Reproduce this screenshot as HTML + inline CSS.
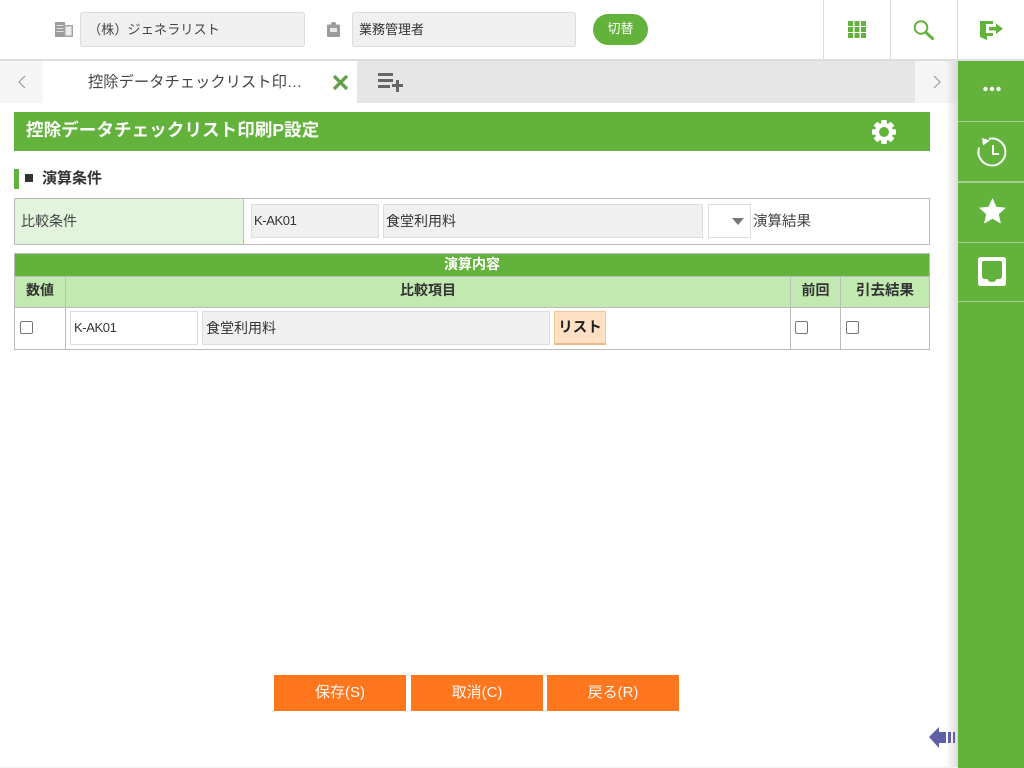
<!DOCTYPE html>
<html lang="ja"><head><meta charset="utf-8"><title>控除データチェックリスト印刷P設定</title>
<style>
html,body{margin:0;padding:0;width:1024px;height:768px;overflow:hidden;background:#fff}
body{font-family:"Liberation Sans","Noto Sans CJK JP",sans-serif;font-size:14px;color:#333;position:relative}
.a{position:absolute;box-sizing:border-box}
.t{position:absolute;white-space:nowrap;line-height:20px}
.inp{position:absolute;box-sizing:border-box;background:#f0f0f0;border:1px solid #ddd;line-height:32px;padding-left:3px;font-size:14px;color:#333;white-space:nowrap}
.w{background:#fff}
.btn{position:absolute;box-sizing:border-box;background:#ff761c;color:#f8f8f8;width:132px;height:36px;top:675px;text-align:center;line-height:35px;font-size:15px}
.cb{position:absolute;box-sizing:border-box;width:13px;height:13px;border:1px solid #767676;border-radius:2px;background:#fff}
.b{font-weight:bold}
</style></head><body>

<!-- header -->
<div class="a" style="left:0;top:59px;width:1024px;height:2px;background:#ddd"></div>
<svg class="a" style="left:55px;top:22px" width="18" height="15" viewBox="0 0 18 15"><rect x="0" y="0" width="10" height="15" fill="#9c9c9c"/><rect x="1.500" y="3" width="7" height="1" fill="#e2e2e2"/><rect x="1.500" y="6" width="7" height="1" fill="#e2e2e2"/><rect x="1.500" y="9" width="7" height="1" fill="#e2e2e2"/><rect x="9" y="3" width="9" height="12" fill="#a6a6a6"/><rect x="10.500" y="4.500" width="6" height="9" fill="#ececec"/></svg>
<div class="inp" style="left:80px;top:12px;width:225px;height:35px;border-radius:3px;line-height:33px;padding-left:7px;font-size:13.200px;color:#444">（株）ジェネラリスト</div>
<svg class="a" style="left:327px;top:22px" width="13" height="15" viewBox="0 0 13 15"><path d="M1 2.500H4V1.500Q4 0 6.500 0T9 1.500V2.500H12Q13 2.500 13 3.500V14Q13 15 12 15H1Q0 15 0 14V3.500Q0 2.500 1 2.500Z" fill="#9c9c9c"/><rect x="3" y="6" width="7" height="4" fill="#e8e8e8"/></svg>
<div class="inp" style="left:352px;top:12px;width:224px;height:35px;border-radius:3px;line-height:33px;padding-left:6px;font-size:13px">業務管理者</div>
<div class="a" style="left:593px;top:14px;width:55px;height:31px;border-radius:16px;background:#62b23c;color:#fff;text-align:center;line-height:30px;font-size:13px">切替</div>
<div class="a" style="left:823px;top:0;width:1px;height:59px;background:#ddd"></div>
<div class="a" style="left:890px;top:0;width:1px;height:59px;background:#ddd"></div>
<div class="a" style="left:957px;top:0;width:1px;height:59px;background:#ddd"></div>
<svg class="a" style="left:848px;top:21px" width="18" height="17" viewBox="0 0 18 17" fill="#62b23c"><rect width="5" height="5"/><rect x="6.500" width="5" height="5"/><rect x="13" width="5" height="5"/><rect y="6" width="5" height="5"/><rect x="6.500" y="6" width="5" height="5"/><rect x="13" y="6" width="5" height="5"/><rect y="12" width="5" height="5"/><rect x="6.500" y="12" width="5" height="5"/><rect x="13" y="12" width="5" height="5"/></svg>
<svg class="a" style="left:913px;top:19px" width="22" height="22" viewBox="0 0 22 22" fill="none" stroke="#62b23c"><circle cx="8" cy="8.500" r="6.300" stroke-width="2"/><path d="M13 13.500L19.500 19.500" stroke-width="3" stroke-linecap="round"/></svg>
<svg class="a" style="left:980px;top:20px" width="23" height="21" viewBox="0 0 23 21" fill="#62b23c"><path d="M0 1H13V4H6V13H13V16H7V20L0 17Z"/><path d="M9 7H16V3.500L23 8.800L16 14V10.500H9Z"/></svg>

<!-- tabs -->
<div class="a" style="left:0;top:61px;width:958px;height:42px;background:#f5f5f5"></div>
<div class="a" style="left:43px;top:61px;width:314px;height:42px;background:#fff"></div>
<div class="a" style="left:357px;top:61px;width:558px;height:42px;background:#e6e6e6"></div>
<svg class="a" style="left:17px;top:75px" width="10" height="14" viewBox="0 0 10 14" fill="none" stroke="#999" stroke-width="1.200"><path d="M8 1L2 7L8 13"/></svg>
<svg class="a" style="left:932px;top:75px" width="10" height="14" viewBox="0 0 10 14" fill="none" stroke="#999" stroke-width="1.200"><path d="M2 1L8 7L2 13"/></svg>
<div class="t" style="left:88px;top:73px;font-size:15.300px;color:#444;width:216px;overflow:hidden">控除データチェックリスト印…</div>
<svg class="a" style="left:333px;top:75px" width="15" height="15" viewBox="0 0 15 15" stroke="#62a04a" stroke-width="3.400"><path d="M1 1L14 14M14 1L1 14"/></svg>
<svg class="a" style="left:378px;top:73px" width="26" height="20" viewBox="0 0 26 20" fill="#666"><rect width="15" height="3"/><rect y="6" width="15" height="3"/><rect y="12" width="12" height="3"/><rect x="14" y="11" width="11" height="3"/><rect x="18" y="7" width="3" height="12"/></svg>

<!-- side bar -->
<div class="a" style="left:946px;top:61px;width:12px;height:707px;background:linear-gradient(to right,rgba(200,200,205,0),rgba(190,190,195,.55))"></div>
<div class="a" style="left:958px;top:61px;width:66px;height:707px;background:#62b23c"></div>
<div class="a" style="left:958px;top:121px;width:66px;height:1px;background:#a3d08e"></div>
<div class="a" style="left:958px;top:181px;width:66px;height:2px;background:#a3d08e"></div>
<div class="a" style="left:958px;top:242px;width:66px;height:1px;background:#a3d08e"></div>
<div class="a" style="left:958px;top:301px;width:66px;height:1px;background:#a3d08e"></div>
<svg class="a" style="left:983px;top:86px" width="18" height="6" viewBox="0 0 18 6" fill="#fff"><circle cx="2.500" cy="3" r="2.200"/><circle cx="9" cy="3" r="2.200"/><circle cx="15.500" cy="3" r="2.200"/></svg>
<svg class="a" style="left:976px;top:136px" width="31" height="31" viewBox="0 0 31 31" fill="none" stroke="#fff" stroke-width="2"><path d="M13 2.800A13.500 13.500 0 1 1 3.200 11.500"/><path d="M6 2L7 9.500L14 4.500Z" fill="#fff" stroke="none"/><path d="M17 9V18H23"/></svg>
<svg class="a" style="left:979px;top:198px" width="27" height="26" viewBox="0 0 27 26" fill="#fff"><path d="M13.500 0L17.400 8.800L27 9.800L19.800 16.200L21.900 25.600L13.500 20.700L5.100 25.600L7.200 16.200L0 9.800L9.600 8.800Z"/></svg>
<svg class="a" style="left:978px;top:257px" width="28" height="29" viewBox="0 0 28 29"><path fill-rule="evenodd" fill="#fff" d="M3 0H25Q28 0 28 3V26Q28 29 25 29H3Q0 29 0 26V3Q0 0 3 0ZM6 4Q4 4 4 6V19Q4 22 7 22H9.500Q10.500 25 14 25T18.500 22H21Q24 22 24 19V6Q24 4 22 4Z"/></svg>

<!-- title -->
<div class="a" style="left:14px;top:112px;width:916px;height:39px;background:#62b23c"></div>
<div class="t b" style="left:26px;top:120px;font-size:17.600px;color:#fff;line-height:21px">控除データチェックリスト印刷P設定</div>
<svg class="a" style="left:871px;top:119px" width="26" height="26" viewBox="0 0 26 26"><g fill="#fff"><circle cx="13" cy="13" r="9"/><rect x="10.200" y="1" width="5.600" height="24" rx="1"/><rect x="10.200" y="1" width="5.600" height="24" rx="1" transform="rotate(45 13 13)"/><rect x="10.200" y="1" width="5.600" height="24" rx="1" transform="rotate(90 13 13)"/><rect x="10.200" y="1" width="5.600" height="24" rx="1" transform="rotate(135 13 13)"/></g><circle cx="13" cy="13" r="5" fill="#62b23c"/></svg>

<!-- section -->
<div class="a" style="left:14px;top:169px;width:5px;height:20px;background:#62b23c"></div>
<div class="a" style="left:25px;top:174px;width:8px;height:8px;background:#333"></div>
<div class="t b" style="left:42px;top:169px;font-size:15px;color:#333">演算条件</div>

<!-- condition table -->
<div class="a" style="left:14px;top:198px;width:916px;height:47px;border:1px solid #bbb"></div>
<div class="a" style="left:15px;top:199px;width:228px;height:45px;background:#e2f4dc"></div>
<div class="a" style="left:243px;top:199px;width:1px;height:45px;background:#bbb"></div>
<div class="t" style="left:21px;top:211px;font-size:14px;color:#444">比較条件</div>
<div class="inp" style="left:251px;top:204px;width:128px;height:34px;font-size:13px;letter-spacing:-.4px;padding-left:2px">K-AK01</div>
<div class="inp" style="left:383px;top:204px;width:320px;height:34px;padding-left:2px">食堂利用料</div>
<div class="inp w" style="left:708px;top:204px;width:43px;height:34px"></div>
<div class="a" style="left:732px;top:218px;width:0;height:0;border-left:6px solid transparent;border-right:6px solid transparent;border-top:7px solid #777"></div>
<div class="t" style="left:753px;top:212px;font-size:14.500px;color:#444">演算結果</div>

<!-- calc table -->
<div class="a" style="left:14px;top:253px;width:916px;height:97px;border:1px solid #bbb"></div>
<div class="a" style="left:15px;top:254px;width:914px;height:22px;background:#62b23c"></div>
<div class="a" style="left:15px;top:276px;width:914px;height:1px;background:#bbb"></div>
<div class="a" style="left:15px;top:277px;width:914px;height:30px;background:#c2eab0"></div>
<div class="a" style="left:15px;top:307px;width:914px;height:1px;background:#bbb"></div>
<div class="a" style="left:65px;top:277px;width:1px;height:72px;background:#bbb"></div>
<div class="a" style="left:790px;top:277px;width:1px;height:72px;background:#bbb"></div>
<div class="a" style="left:840px;top:277px;width:1px;height:72px;background:#bbb"></div>
<div class="t b" style="left:15px;top:254px;width:914px;text-align:center;font-size:14px;color:#fff">演算内容</div>
<div class="t b" style="left:15px;top:280px;width:50px;text-align:center;font-size:14px">数値</div>
<div class="t b" style="left:66px;top:280px;width:724px;text-align:center;font-size:14px">比較項目</div>
<div class="t b" style="left:791px;top:280px;width:49px;text-align:center;font-size:14px">前回</div>
<div class="t b" style="left:841px;top:281px;width:88px;text-align:center;font-size:14.500px">引去結果</div>
<div class="cb" style="left:20px;top:321px"></div>
<div class="inp w" style="left:70px;top:311px;width:128px;height:34px;font-size:13px;letter-spacing:-.4px">K-AK01</div>
<div class="inp" style="left:202px;top:311px;width:348px;height:34px">食堂利用料</div>
<div class="a b" style="left:554px;top:311px;width:52px;height:34px;background:#fee0c5;border:1px solid #f5c89a;border-bottom:2px solid #f0b888;text-align:center;line-height:33px;font-size:14.500px;color:#222">リスト</div>
<div class="cb" style="left:795px;top:321px"></div>
<div class="cb" style="left:846px;top:321px"></div>

<!-- buttons -->
<div class="btn" style="left:274px">保存(S)</div>
<div class="btn" style="left:411px">取消(C)</div>
<div class="btn" style="left:547px">戻る(R)</div>

<!-- back arrow -->
<svg class="a" style="left:929px;top:726px" width="28" height="23" viewBox="0 0 28 23" fill="#6060a4"><path d="M0 11L10 1V6H17V17H10V22Z"/><rect x="19" y="6" width="3" height="11"/><rect x="24" y="6" width="2" height="11"/></svg>
<div class="a" style="left:0;top:767px;width:958px;height:1px;background:#f2f2f2"></div>
</body></html>
